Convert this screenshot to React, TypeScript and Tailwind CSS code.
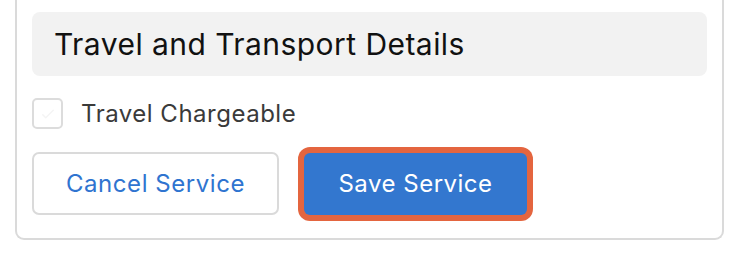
import React from 'react';

const App = () => {
  return (
    <div className="w-[746px] h-[260px] bg-white" style={{ fontFamily: 'Inter, "Liberation Sans", sans-serif' }}>
      <div className="ml-[15px] w-[709px] border-2 border-t-0 border-[#dadada] rounded-b-[9px] px-[15px] pt-[12px] pb-[23px]">
        {/* Section header */}
        <div className="h-[64px] bg-[#f2f2f2] rounded-[8px] flex items-center pl-[22px]">
          <h2 className="text-[30px] leading-none text-[#111111] tracking-[0.45px]">Travel and Transport Details</h2>
        </div>

        {/* Checkbox row */}
        <label className="mt-[22px] flex items-center gap-[18px]">
          <span className="w-[31px] h-[31px] border-2 border-[#dcdcdc] rounded-[5px] flex items-center justify-center">
            <svg width="18" height="18" viewBox="0 0 24 24" fill="none" stroke="#f4f4f4" strokeWidth="2" strokeLinecap="round" strokeLinejoin="round">
              <path d="M5 13l4 4L19 7" />
            </svg>
          </span>
          <span className="text-[24px] leading-none text-[#3a3a3a] tracking-[0.5px]">Travel Chargeable</span>
        </label>

        {/* Actions */}
        <div className="mt-[23px] flex items-center gap-[25px]">
          <button className="w-[247px] h-[63px] border-2 border-[#dadada] rounded-[7px] text-[24px] text-[#2f74d0] bg-white tracking-[0.55px]">
            Cancel Service
          </button>
          <button className="w-[223px] h-[62px] rounded-[6px] bg-[#3377cf] text-[24px] text-white tracking-[0.5px] ring-[6px] ring-[#e4653f]">
            Save Service
          </button>
        </div>
      </div>
    </div>
  );
};

export default App;
